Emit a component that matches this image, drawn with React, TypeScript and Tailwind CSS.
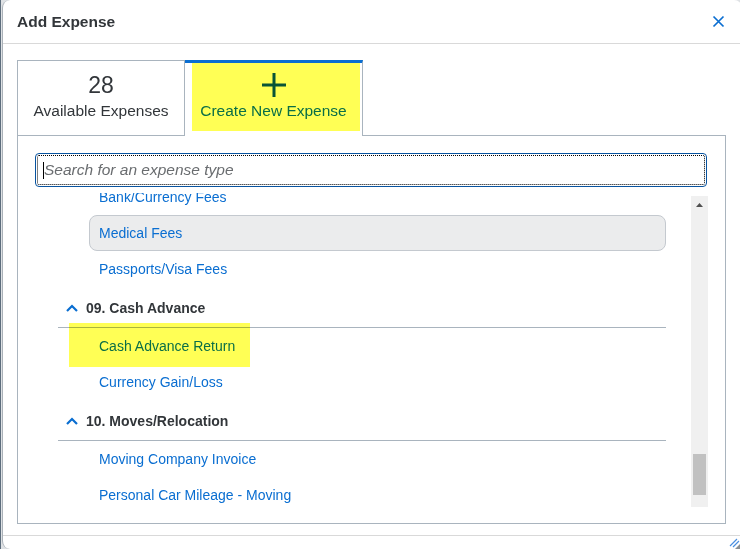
import clsx from "clsx";

type Entry =
  | { kind: "item"; label: string; selected?: boolean; marked?: boolean }
  | { kind: "group"; label: string };

const entries: Entry[] = [
  { kind: "item", label: "Bank/Currency Fees" },
  { kind: "item", label: "Medical Fees", selected: true },
  { kind: "item", label: "Passports/Visa Fees" },
  { kind: "group", label: "09. Cash Advance" },
  { kind: "item", label: "Cash Advance Return", marked: true },
  { kind: "item", label: "Currency Gain/Loss" },
  { kind: "group", label: "10. Moves/Relocation" },
  { kind: "item", label: "Moving Company Invoice" },
  { kind: "item", label: "Personal Car Mileage - Moving" },
];

const ChevronUp = () => (
  <svg width="12" height="8" viewBox="0 0 12 8" fill="none">
    <polyline points="1,7 6,2 11,7" stroke="#0a6ed1" strokeWidth="2.2" />
  </svg>
);

const GroupRow = ({ label }: { label: string }) => (
  <div className="flex h-[41px] items-center gap-[8px] border-b border-[#a9b4be] pl-[8px] pt-[2px]">
    <ChevronUp />
    <span className="text-[14px] font-bold text-[#32363a]">{label}</span>
  </div>
);

const ItemRow = ({ label, selected, marked }: { label: string; selected?: boolean; marked?: boolean }) => (
  <div className="relative ml-[31px] flex h-[36px]">
    {marked && (
      <span className="absolute -left-[20px] -top-[5px] h-[44px] w-[181px] bg-[#ffff55] mix-blend-multiply" />
    )}
    <div
      className={clsx(
        "flex flex-1 items-center rounded-[8px] border pl-[9px] text-[14px] text-[#0a6ed1]",
        selected ? "border-[#c4c9cf] bg-[#ebeced]" : "border-transparent"
      )}
    >
      {label}
    </div>
  </div>
);

export default function App() {
  return (
    <div className="flex h-[549px] w-[740px] overflow-hidden bg-[#dfe2e5] font-['Liberation_Sans',Arial,sans-serif]">
      <div className="w-[1px] shrink-0 bg-[#5d6d7c]" />
      <div className="relative ml-[1px] flex w-[740px] shrink-0 flex-col rounded-[8px] border-l border-[#aab1b8] bg-white">
        {/* header */}
        <div className="flex h-[44px] shrink-0 items-center justify-between border-b border-[#d9d9d9] pl-[14px] pr-[17px]">
          <h1 className="text-[15.5px] font-bold text-[#32363a]">Add Expense</h1>
          <svg width="13" height="13" viewBox="0 0 13 13">
            <path d="M1.5 1.5 L11.5 11.5 M11.5 1.5 L1.5 11.5" stroke="#0a6ed1" strokeWidth="1.7" />
          </svg>
        </div>

        {/* body */}
        <div className="flex flex-col border-b border-[#d9d9d9] pl-[14px] pt-[16px] pb-[11px]">
          {/* tabs */}
          <div className="flex h-[76px] w-[709px]">
            <div className="flex w-[168px] flex-col items-center border border-[#a9b4be] pt-[10px] text-[#32363a]">
              <span className="text-[23px] leading-[28px]">28</span>
              <span className="mt-[3px] text-[15.5px] leading-[18px]">Available Expenses</span>
            </div>
            <div className="relative flex w-[178px] flex-col items-center border-t-[3px] border-r border-t-[#0a6ed1] border-r-[#a9b4be] pt-[10px] text-[#0a6ed1]">
              <svg width="24" height="24" viewBox="0 0 24 24">
                <path d="M12 0 V24 M0 12 H24" stroke="#0854a0" strokeWidth="3" />
              </svg>
              <span className="mt-[5px] text-[15.5px] leading-[18px]">Create New Expense</span>
              <span className="absolute left-[7px] top-0 h-[68px] w-[168px] bg-[#ffff55] mix-blend-multiply" />
            </div>
            <div className="flex-1 border-b border-[#a9b4be]" />
          </div>

          {/* panel */}
          <div className="flex h-[388px] w-[709px] flex-col border-x border-b border-[#a9b4be] px-[17px] pt-[17px]">
            <div className="flex h-[34px] w-[672px] items-center rounded-[4px] border border-[#0854a0] pl-[7px] outline-1 outline-dotted outline-offset-[-3px] outline-black">
              <span className="h-[17px] w-[1px] bg-black" />
              <span className="text-[15.5px] italic text-[#6a6d70]">Search for an expense type</span>
            </div>

            <div className="flex h-[320px]">
              <div className="mt-[6px] h-[314px] w-[656px] overflow-hidden">
                <div className="-mt-[14px] flex flex-col pl-[23px] pr-[25px]">
                  {entries.map((e) =>
                    e.kind === "group" ? (
                      <GroupRow key={e.label} label={e.label} />
                    ) : (
                      <ItemRow key={e.label} label={e.label} selected={e.selected} marked={e.marked} />
                    )
                  )}
                </div>
              </div>
              {/* scrollbar */}
              <div className="mt-[9px] flex h-[311px] w-[17px] flex-col bg-[#f0f0f0]">
                <div className="flex h-[17px] items-center justify-center">
                  <svg width="7" height="4" viewBox="0 0 7 4">
                    <polygon points="0,4 3.5,0 7,4" fill="#505050" />
                  </svg>
                </div>
                <div className="mx-[2px] mt-[241px] h-[41px] bg-[#c1c1c1]" />
              </div>
            </div>
          </div>
        </div>

        <div className="flex-1" />

        {/* resize grip */}
        <svg width="14" height="12" viewBox="0 0 14 12" className="absolute bottom-[0px] left-[724px]">
          <path d="M3 9 L10 2 M6 10 L12 4" stroke="#4a8fe0" strokeWidth="1.2" />
          <polygon points="14,6 14,12 8,12" fill="#8a8f94" />
        </svg>
      </div>
    </div>
  );
}
